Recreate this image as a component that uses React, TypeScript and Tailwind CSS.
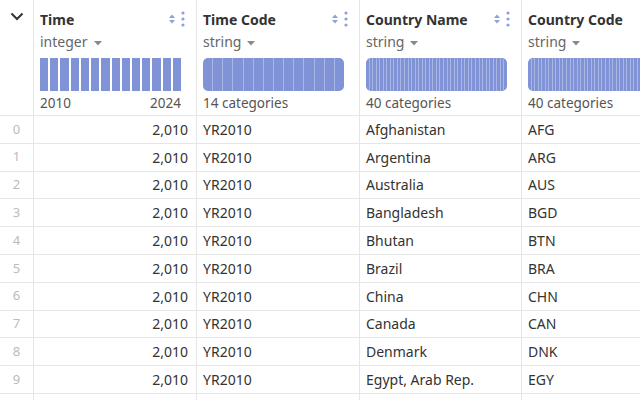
const rows = [
  ["Afghanistan", "AFG"],
  ["Argentina", "ARG"],
  ["Australia", "AUS"],
  ["Bangladesh", "BGD"],
  ["Bhutan", "BTN"],
  ["Brazil", "BRA"],
  ["China", "CHN"],
  ["Canada", "CAN"],
  ["Denmark", "DNK"],
  ["Egypt, Arab Rep.", "EGY"],
];

const SortIcon = () => (
  <svg width="22" height="24" viewBox="0 0 22 24" className="shrink-0">
    <path d="M3 11 L6 7.5 L9 11 Z" fill="#8fa0d9" />
    <path d="M3 13 L6 16.5 L9 13 Z" fill="#8fa0d9" />
    <circle cx="17" cy="6" r="1.6" fill="#8fa0d9" />
    <circle cx="17" cy="12" r="1.6" fill="#8fa0d9" />
    <circle cx="17" cy="18" r="1.6" fill="#8fa0d9" />
  </svg>
);

const Caret = () => (
  <svg width="8" height="6" viewBox="0 0 8 6" className="ml-[6px] mt-[2px]">
    <path d="M0 1 L8 1 L4 5.5 Z" fill="#888" />
  </svg>
);

const Histogram = () => (
  <div className="flex gap-[2px] h-[33px] w-[141px]">
    {Array.from({ length: 14 }).map((_, i) => (
      <div key={i} className="flex-1 bg-[#7f93d6]" />
    ))}
  </div>
);

const Categories = ({ n }: { n: number }) => (
  <div className="flex h-[33px] w-[141px] rounded-[5px] overflow-hidden bg-[#7f93d6]">
    {Array.from({ length: n }).map((_, i) => (
      <div key={i} className={i === 0 ? "flex-1" : "flex-1 border-l border-[#a8b6e6]"} />
    ))}
  </div>
);

const Header = ({
  title,
  type,
  children,
  footer,
  icons = true,
}: {
  title: string;
  type: string;
  children: React.ReactNode;
  footer: React.ReactNode;
  icons?: boolean;
}) => (
  <div className="flex flex-col pl-[6px] pt-[7px] border-r border-[#e6e6e6]">
    <div className="flex items-center justify-between h-[24px] pr-[8px]">
      <span className="font-bold text-[14px] text-[#333]">{title}</span>
      {icons && <SortIcon />}
    </div>
    <div className="flex items-center h-[21px] text-[14px] text-[#666]">
      {type}
      <Caret />
    </div>
    <div className="mt-[6px]">{children}</div>
    <div className="h-[22px] pt-[2px] flex items-center text-[13.5px] text-[#555]">{footer}</div>
  </div>
);

const cell = "h-[27.8px] border-t border-r border-[#e6e6e6] flex items-center";

export default function App() {
  return (
    <div
      className="w-[640px] h-[400px] overflow-hidden bg-white text-[#333]"
      style={{ fontFamily: '"Noto Sans", "Open Sans", sans-serif' }}
    >
      <div className="grid grid-cols-[34px_163px_163px_162px_200px] w-[722px]">
        <div className="border-r border-[#e6e6e6] flex justify-center pt-[11px] h-[115px]">
          <svg width="14" height="10" viewBox="0 0 14 10">
            <path d="M1.5 2.5 L7 8 L12.5 2.5" fill="none" stroke="#333" strokeWidth="2" />
          </svg>
        </div>
        <Header
          title="Time"
          type="integer"
          footer={
            <div className="flex justify-between w-[141px]">
              <span>2010</span>
              <span>2024</span>
            </div>
          }
        >
          <Histogram />
        </Header>
        <Header title="Time Code" type="string" footer="14 categories">
          <Categories n={14} />
        </Header>
        <Header title="Country Name" type="string" footer="40 categories">
          <Categories n={40} />
        </Header>
        <Header title="Country Code" type="string" footer="40 categories">
          <Categories n={40} />
        </Header>

        {rows.map(([name, code], i) => (
          <div key={i} className="contents text-[14px]">
            <div className={`${cell} justify-center text-[#bbb] text-[13px]`}>{i}</div>
            <div className={`${cell} justify-end pr-[8px]`}>2,010</div>
            <div className={`${cell} pl-[6px]`}>YR2010</div>
            <div className={`${cell} pl-[6px]`}>{name}</div>
            <div className={`${cell} pl-[6px]`}>{code}</div>
          </div>
        ))}
        {/* next row, cut off by the bottom edge */}
        <div className={cell} />
        <div className={cell} />
        <div className={cell} />
        <div className={cell} />
        <div className={cell} />
      </div>
    </div>
  );
}
